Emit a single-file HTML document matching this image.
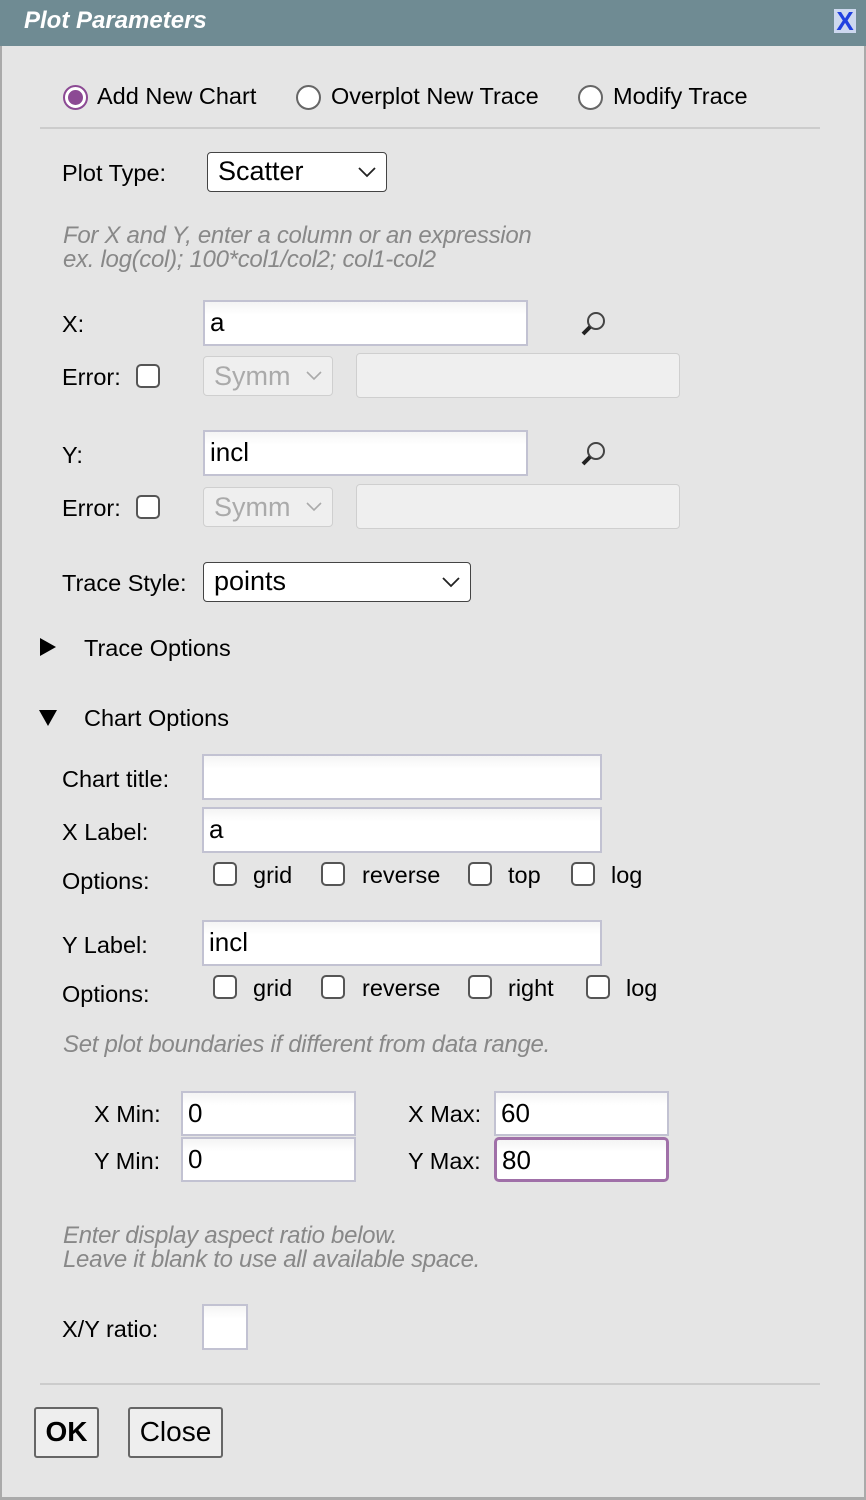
<!DOCTYPE html>
<html><head><style>
*{box-sizing:border-box;margin:0;padding:0}
body{width:866px;height:1500px;background:#e5e5e5;font-family:"Liberation Sans",sans-serif;position:relative;overflow:hidden;color:#000}
.a{position:absolute;white-space:nowrap}
.l{font-size:23.5px;line-height:28px}
.hint{font-size:24px;font-style:italic;color:#888;line-height:24px;letter-spacing:-0.3px}
.in{position:absolute;background:linear-gradient(#f4f4f4,#fff 30%);border:2px solid #c2c2d2;font-size:26px;line-height:40px;padding-left:5px}
.dis{position:absolute;background:#efefef;border:1.5px solid #cfcfcf;border-radius:4px}
.cb{position:absolute;width:24px;height:24px;border:2px solid #555;border-radius:5px;background:#fff}
.rd{position:absolute;width:25px;height:25px;border:2px solid #666;border-radius:50%;background:#fff}
.sel{position:absolute;background:#fff;border:1.5px solid #444;border-radius:4px;font-size:27px;line-height:36px;padding-left:10px}
.hr{position:absolute;left:40px;width:780px;height:2px;background:#ccc}
.btn{position:absolute;border:2px solid #666;border-radius:3px;background:#eee;font-size:28px;line-height:46px;text-align:center}
.chev{position:absolute;top:13px}
</style></head><body>
<div class="a" style="left:0;top:0;width:866px;height:46px;background:#6f8b93"></div>
<div class="a" style="left:24px;top:6px;font-size:24px;font-weight:bold;font-style:italic;color:#fff;line-height:30px">Plot Parameters</div>
<div class="a" style="left:834px;top:9px;width:22px;height:24px;background:#cdd8ef;color:#2040e0;font-size:26px;font-weight:bold;line-height:24px;text-align:center">X</div>
<div class="a" style="left:0;top:46px;width:2px;height:1454px;background:#aaa"></div>
<div class="a" style="left:864px;top:46px;width:2px;height:1454px;background:#aaa"></div>
<div class="a" style="left:0;top:1497px;width:866px;height:3px;background:#aaa"></div>

<div class="rd" style="left:63px;top:85px;border-color:#8c4a94"><div style="position:absolute;left:3px;top:3px;width:15px;height:15px;border-radius:50%;background:#8c4a94"></div></div>
<div class="a l" style="left:97px;top:82px">Add New Chart</div>
<div class="rd" style="left:296px;top:85px"></div>
<div class="a l" style="left:331px;top:82px">Overplot New Trace</div>
<div class="rd" style="left:578px;top:85px"></div>
<div class="a l" style="left:613px;top:82px">Modify Trace</div>
<div class="hr" style="top:127px"></div>

<div class="a l" style="left:62px;top:159px">Plot Type:</div>
<div class="sel" style="left:207px;top:152px;width:180px;height:40px">Scatter<svg class="chev" style="right:10px" width="18" height="12"><path d="M1 2 L9 10 L17 2" fill="none" stroke="#222" stroke-width="1.8"/></svg></div>
<div class="a hint" style="left:63px;top:224px">For X and Y, enter a column or an expression<br>ex. log(col); 100*col1/col2; col1-col2</div>

<div class="a l" style="left:62px;top:310px">X:</div>
<div class="in" style="left:203px;top:300px;width:325px;height:46px">a</div>
<svg class="a" style="left:578px;top:308px" width="32" height="32"><circle cx="18" cy="13" r="8" fill="none" stroke="#444" stroke-width="2"/><line x1="12" y1="19" x2="5" y2="26" stroke="#222" stroke-width="4"/></svg>
<div class="a l" style="left:62px;top:363px">Error:</div>
<div class="cb" style="left:136px;top:364px"></div>
<div class="dis" style="left:203px;top:356px;width:130px;height:40px;color:#aaa;font-size:27px;line-height:38px;padding-left:10px">Symm<svg class="chev" style="right:10px;top:14px" width="16" height="10"><path d="M1 1 L8 8 L15 1" fill="none" stroke="#aaa" stroke-width="1.6"/></svg></div>
<div class="dis" style="left:356px;top:353px;width:324px;height:45px"></div>

<div class="a l" style="left:62px;top:441px">Y:</div>
<div class="in" style="left:203px;top:430px;width:325px;height:46px">incl</div>
<svg class="a" style="left:578px;top:438px" width="32" height="32"><circle cx="18" cy="13" r="8" fill="none" stroke="#444" stroke-width="2"/><line x1="12" y1="19" x2="5" y2="26" stroke="#222" stroke-width="4"/></svg>
<div class="a l" style="left:62px;top:494px">Error:</div>
<div class="cb" style="left:136px;top:495px"></div>
<div class="dis" style="left:203px;top:487px;width:130px;height:40px;color:#aaa;font-size:27px;line-height:38px;padding-left:10px">Symm<svg class="chev" style="right:10px;top:14px" width="16" height="10"><path d="M1 1 L8 8 L15 1" fill="none" stroke="#aaa" stroke-width="1.6"/></svg></div>
<div class="dis" style="left:356px;top:484px;width:324px;height:45px"></div>

<div class="a l" style="left:62px;top:569px">Trace Style:</div>
<div class="sel" style="left:203px;top:562px;width:268px;height:40px">points<svg class="chev" style="right:10px" width="18" height="12"><path d="M1 2 L9 10 L17 2" fill="none" stroke="#222" stroke-width="1.8"/></svg></div>

<svg class="a" style="left:40px;top:638px" width="16" height="18"><path d="M0 0 L16 9 L0 18Z" fill="#000"/></svg>
<div class="a l" style="left:84px;top:634px">Trace Options</div>
<svg class="a" style="left:39px;top:710px" width="18" height="16"><path d="M0 0 L18 0 L9 16Z" fill="#000"/></svg>
<div class="a l" style="left:84px;top:704px">Chart Options</div>

<div class="a l" style="left:62px;top:765px">Chart title:</div>
<div class="in" style="left:202px;top:754px;width:400px;height:46px"></div>
<div class="a l" style="left:62px;top:818px">X Label:</div>
<div class="in" style="left:202px;top:807px;width:400px;height:46px">a</div>
<div class="a l" style="left:62px;top:867px">Options:</div>
<div class="cb" style="left:213px;top:862px"></div><div class="a l" style="left:253px;top:861px">grid</div>
<div class="cb" style="left:321px;top:862px"></div><div class="a l" style="left:362px;top:861px">reverse</div>
<div class="cb" style="left:468px;top:862px"></div><div class="a l" style="left:508px;top:861px">top</div>
<div class="cb" style="left:571px;top:862px"></div><div class="a l" style="left:611px;top:861px">log</div>

<div class="a l" style="left:62px;top:931px">Y Label:</div>
<div class="in" style="left:202px;top:920px;width:400px;height:46px">incl</div>
<div class="a l" style="left:62px;top:980px">Options:</div>
<div class="cb" style="left:213px;top:975px"></div><div class="a l" style="left:253px;top:974px">grid</div>
<div class="cb" style="left:321px;top:975px"></div><div class="a l" style="left:362px;top:974px">reverse</div>
<div class="cb" style="left:468px;top:975px"></div><div class="a l" style="left:508px;top:974px">right</div>
<div class="cb" style="left:586px;top:975px"></div><div class="a l" style="left:626px;top:974px">log</div>

<div class="a hint" style="left:63px;top:1033px">Set plot boundaries if different from data range.</div>

<div class="a l" style="left:94px;top:1100px">X Min:</div>
<div class="in" style="left:181px;top:1091px;width:175px;height:45px">0</div>
<div class="a l" style="left:408px;top:1100px">X Max:</div>
<div class="in" style="left:494px;top:1091px;width:175px;height:45px">60</div>
<div class="a l" style="left:94px;top:1147px">Y Min:</div>
<div class="in" style="left:181px;top:1137px;width:175px;height:45px">0</div>
<div class="a l" style="left:408px;top:1147px">Y Max:</div>
<div class="in" style="left:494px;top:1137px;width:175px;height:45px;border:3px solid #a070a8;border-radius:5px">80</div>

<div class="a hint" style="left:63px;top:1224px">Enter display aspect ratio below.<br>Leave it blank to use all available space.</div>
<div class="a l" style="left:62px;top:1315px">X/Y ratio:</div>
<div class="in" style="left:202px;top:1304px;width:46px;height:46px"></div>
<div class="hr" style="top:1383px"></div>
<div class="btn" style="left:34px;top:1407px;width:65px;height:51px;font-weight:bold">OK</div>
<div class="btn" style="left:128px;top:1407px;width:95px;height:51px">Close</div>
</body></html>
